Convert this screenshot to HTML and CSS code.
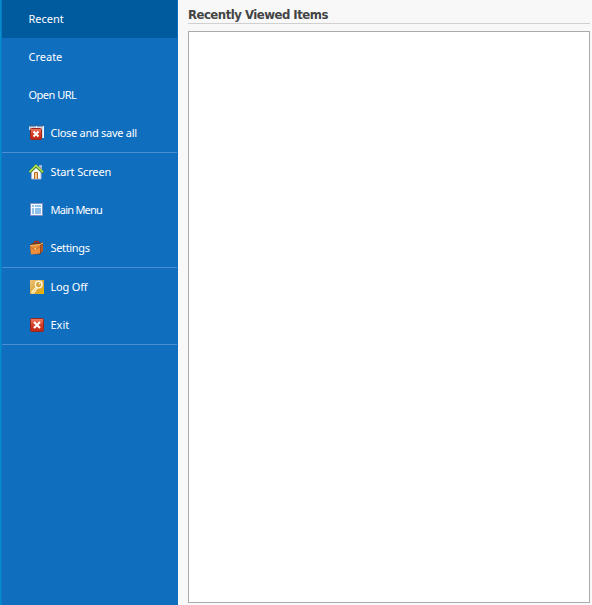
FILE: index.html
```
<!DOCTYPE html>
<html lang="en">
<head>
<meta charset="utf-8">
<title>Recently Viewed Items</title>
<link rel="stylesheet" href="styles.css">
</head>
<body>
<div class="app">
  <nav class="sidebar">
    <div class="item selected"><span>Recent</span></div>
    <div class="item"><span>Create</span></div>
    <div class="item"><span class="w-url">Open URL</span></div>
    <div class="item">
      <svg class="icon" viewBox="0 0 16 16"><path d="M0 1h7v4H0zM8 1h7v12h-4V4H8z" fill="#c9d9ef"/><path d="M0 1h7M8 1h7" stroke="#53617d"/><path d="M7.5 1v3M14.5 1v12" stroke="#f4f6fa"/><rect x="1.5" y="3.5" width="11" height="11" rx="1" fill="url(#red)" stroke="#9d2719"/><path d="M4.5 6.5l5 5M9.5 6.5l-5 5" stroke="#fff" stroke-width="2"/></svg>
      <span class="w-close">Close and save all</span>
    </div>
    <hr>
    <div class="item">
      <svg class="icon" viewBox="0 0 16 16"><path d="M10 1h3v6h-3z" fill="#a9b2d8"/><path d="M2.5 7l4.5-4.5L12 7v8H2.5z" fill="#f8f9ff" stroke="#a8b3dc"/><path d="M5.5 15V8.5h3V15" fill="#f5c98b" stroke="#b66b29"/><path d="M.5 8.5l6.5-6.5 7 6.5" fill="none" stroke="#4b8b27" stroke-width="2.8"/><path d="M.5 8l6.5-6.5 7 6.5" fill="none" stroke="#bce75a" stroke-width="1.3"/></svg>
      <span class="w-start">Start Screen</span>
    </div>
    <div class="item">
      <svg class="icon" viewBox="0 0 16 16"><rect x="1.5" y="1.5" width="12" height="12" fill="#f5fbff" stroke="#7c8fc8"/><path d="M3 3h2v2H3zM6 3h6v2H6zM3 6h2v6H3zM6 6h6v6H6z" fill="#8fc3eb"/></svg>
      <span class="w-menu">Main Menu</span>
    </div>
    <div class="item">
      <svg class="icon" viewBox="0 0 16 16"><path d="M5 3.5l1-2h3l1 1.5" fill="none" stroke="#a52d1c" stroke-width="1.6"/><path d="M1 5l3-2 10-.5v8l-3 4-9-.5z" fill="#773719"/><path d="M1 5.5l10-1v9l-9 1z" fill="#eb8e3a"/><path d="M1.5 5.5l9.5-1 3-1.5" fill="none" stroke="#ffc56f"/><path d="M2 7.5l4 2 5-3 3-2" fill="none" stroke="#b0602a" stroke-width=".8"/><path d="M5.5 8h1.5v1.5H5.5z" fill="#ffdca0"/><path d="M11.5 6L14 4v7l-2.500 2z" fill="#b85b24"/></svg>
      <span class="w-settings">Settings</span>
    </div>
    <hr>
    <div class="item">
      <svg class="icon" viewBox="0 0 16 16"><rect x="1" y="1" width="14" height="14" fill="url(#gold)"/><circle cx="9.7" cy="5.6" r="3.3" fill="#d4a13b" stroke="#fff9df" stroke-width="1.4"/><circle cx="10.6" cy="4.7" r=".9" fill="#fff4c6"/><path d="M7.500 8L3 12.500V14h2v-1.500h1.500V11L9 8.800" fill="none" stroke="#fff4c6" stroke-width="1.1"/></svg>
      <span class="w-log">Log Off</span>
    </div>
    <div class="item">
      <svg class="icon" viewBox="0 0 16 16"><defs><linearGradient id="red" x2="0" y2="1"><stop stop-color="#ee8069"/><stop offset=".5" stop-color="#d83a24"/><stop offset="1" stop-color="#bd2817"/></linearGradient><linearGradient id="gold" x2="1" y2="1"><stop stop-color="#edc478"/><stop offset=".6" stop-color="#d9a233"/><stop offset="1" stop-color="#e9b900"/></linearGradient></defs><rect x="1.500" y="1.500" width="13" height="13" rx="1.200" fill="url(#red)" stroke="#92291f"/><path d="M5 5l6 6M11 5l-6 6" stroke="#fff" stroke-width="2.200"/></svg>
      <span>Exit</span>
    </div>
    <hr>
  </nav>
  <main class="content">
    <h1>Recently Viewed Items</h1>
    <div class="list"></div>
  </main>
</div>
</body>
</html>
```
FILE: styles.css
```
* { box-sizing: border-box; }
body { margin: 0; background: #f8f8f8; overflow: hidden; }
.app { display: flex; height: 605px; }
.sidebar {
  width: 178px;
  padding: 0 1px;
  border-left: 1px solid #008fca;
  box-shadow: inset 1px 0 #1079c4;
  background: #106ebe;
  color: #fff;
  font: 11px/14px "Noto Sans", sans-serif;
}
.item {
  display: flex;
  align-items: center;
  height: 38px;
  padding-left: 26.5px;
  white-space: nowrap;
}
.selected { background: #005a9e; }
.icon { width: 16px; height: 16px; margin: 0 5.5px 0 .5px; flex: none; }
.w-url { letter-spacing: -.5px; }
.w-close { letter-spacing: -.28px; }
.w-start { letter-spacing: -.15px; }
.w-menu { letter-spacing: -.75px; }
.w-settings { letter-spacing: -.35px; }
.w-log { letter-spacing: -.2px; }
hr { height: 1px; margin: 0; border: 0; background: #4a90d0; }
.content {
  flex: 1;
  display: flex;
  flex-direction: column;
  padding: 0 2px 2px 10px;
}
h1 {
  height: 24px;
  margin: 0 0 7px;
  padding-top: 7px;
  border-bottom: 1px solid #d0d0d0;
  color: #444;
  font: bold 13px/16px "DejaVu Sans Condensed", "DejaVu Sans", sans-serif;
  letter-spacing: -.5px;
  white-space: nowrap;
}
.list { flex: 1; background: #fff; border: 1px solid #ababab; }
```
